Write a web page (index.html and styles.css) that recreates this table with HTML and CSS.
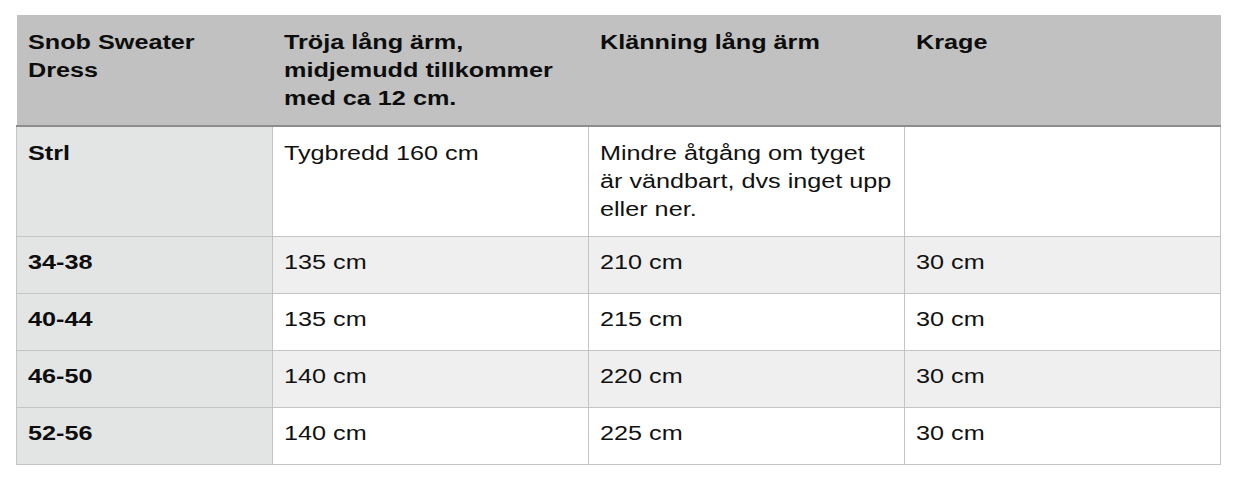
FILE: index.html
```html
<!DOCTYPE html>
<html lang="sv">
<head>
<meta charset="utf-8">
<title>Snob Sweater Dress</title>
<link rel="stylesheet" href="styles.css">
</head>
<body>
<table class="sizes">
  <colgroup>
    <col class="c1"><col class="c2"><col class="c3"><col class="c4">
  </colgroup>
  <thead>
    <tr class="head">
      <th><span class="t">Snob Sweater<br>Dress</span></th>
      <th><span class="t">Tröja lång ärm,<br>midjemudd tillkommer<br>med ca 12 cm.</span></th>
      <th><span class="t">Klänning lång ärm</span></th>
      <th><span class="t">Krage</span></th>
    </tr>
  </thead>
  <tbody>
    <tr class="tall">
      <th><span class="t">Strl</span></th>
      <td><span class="t">Tygbredd 160 cm</span></td>
      <td><span class="t">Mindre åtgång om tyget<br>är vändbart, dvs inget upp<br>eller ner.</span></td>
      <td></td>
    </tr>
    <tr class="alt">
      <th><span class="t">34-38</span></th><td><span class="t">135 cm</span></td><td><span class="t">210 cm</span></td><td><span class="t">30 cm</span></td>
    </tr>
    <tr>
      <th><span class="t">40-44</span></th><td><span class="t">135 cm</span></td><td><span class="t">215 cm</span></td><td><span class="t">30 cm</span></td>
    </tr>
    <tr class="alt">
      <th><span class="t">46-50</span></th><td><span class="t">140 cm</span></td><td><span class="t">220 cm</span></td><td><span class="t">30 cm</span></td>
    </tr>
    <tr>
      <th><span class="t">52-56</span></th><td><span class="t">140 cm</span></td><td><span class="t">225 cm</span></td><td><span class="t">30 cm</span></td>
    </tr>
  </tbody>
</table>
</body>
</html>
```
FILE: styles.css
```css
html, body {
  margin: 0;
  padding: 0;
  background: #ffffff;
}
body {
  padding: 15px 0 0 16px;
  font-family: "Liberation Sans", Arial, Helvetica, sans-serif;
  color: #111111;
}
.sizes {
  border-collapse: collapse;
  table-layout: fixed;
  width: 1205px;
  font-size: 20px;
  line-height: 28px;
}
.c1 { width: 256px; }
.c2, .c3, .c4 { width: 316px; }
.sizes th, .sizes td {
  text-align: left;
  vertical-align: top;
  padding: 11px 11px 0 11px;
  border: 1px solid #c4c4c4;
  box-sizing: border-box;
  white-space: nowrap;
}
.t {
  display: inline-block;
  transform: scaleX(1.26);
  transform-origin: 0 50%;
}
.sizes th { font-weight: bold; color: #0d0d0d; }
.sizes td { font-weight: normal; }
.head th {
  background: #c0c1c0;
  height: 111px;
  padding-top: 13px;
  border-top: none;
  border-left: none;
  border-right: none;
  border-bottom: 2px solid #8d8d8d;
}
.head th:last-child { border-right: 1px solid #c0c1c0; }
tbody th {
  background: #e3e4e4;
  border-left: 1px solid #c4c4c4;
  border-right: 1px solid #9a9a9a;
}
tbody tr { height: 57px; }
tbody tr.tall { height: 110px; }
tbody tr.tall th, tbody tr.tall td { padding-top: 12px; }
tbody tr td { background: #ffffff; }
tbody tr.alt td { background: #efefef; }
tbody tr.alt th { background: #e3e4e4; }
```
